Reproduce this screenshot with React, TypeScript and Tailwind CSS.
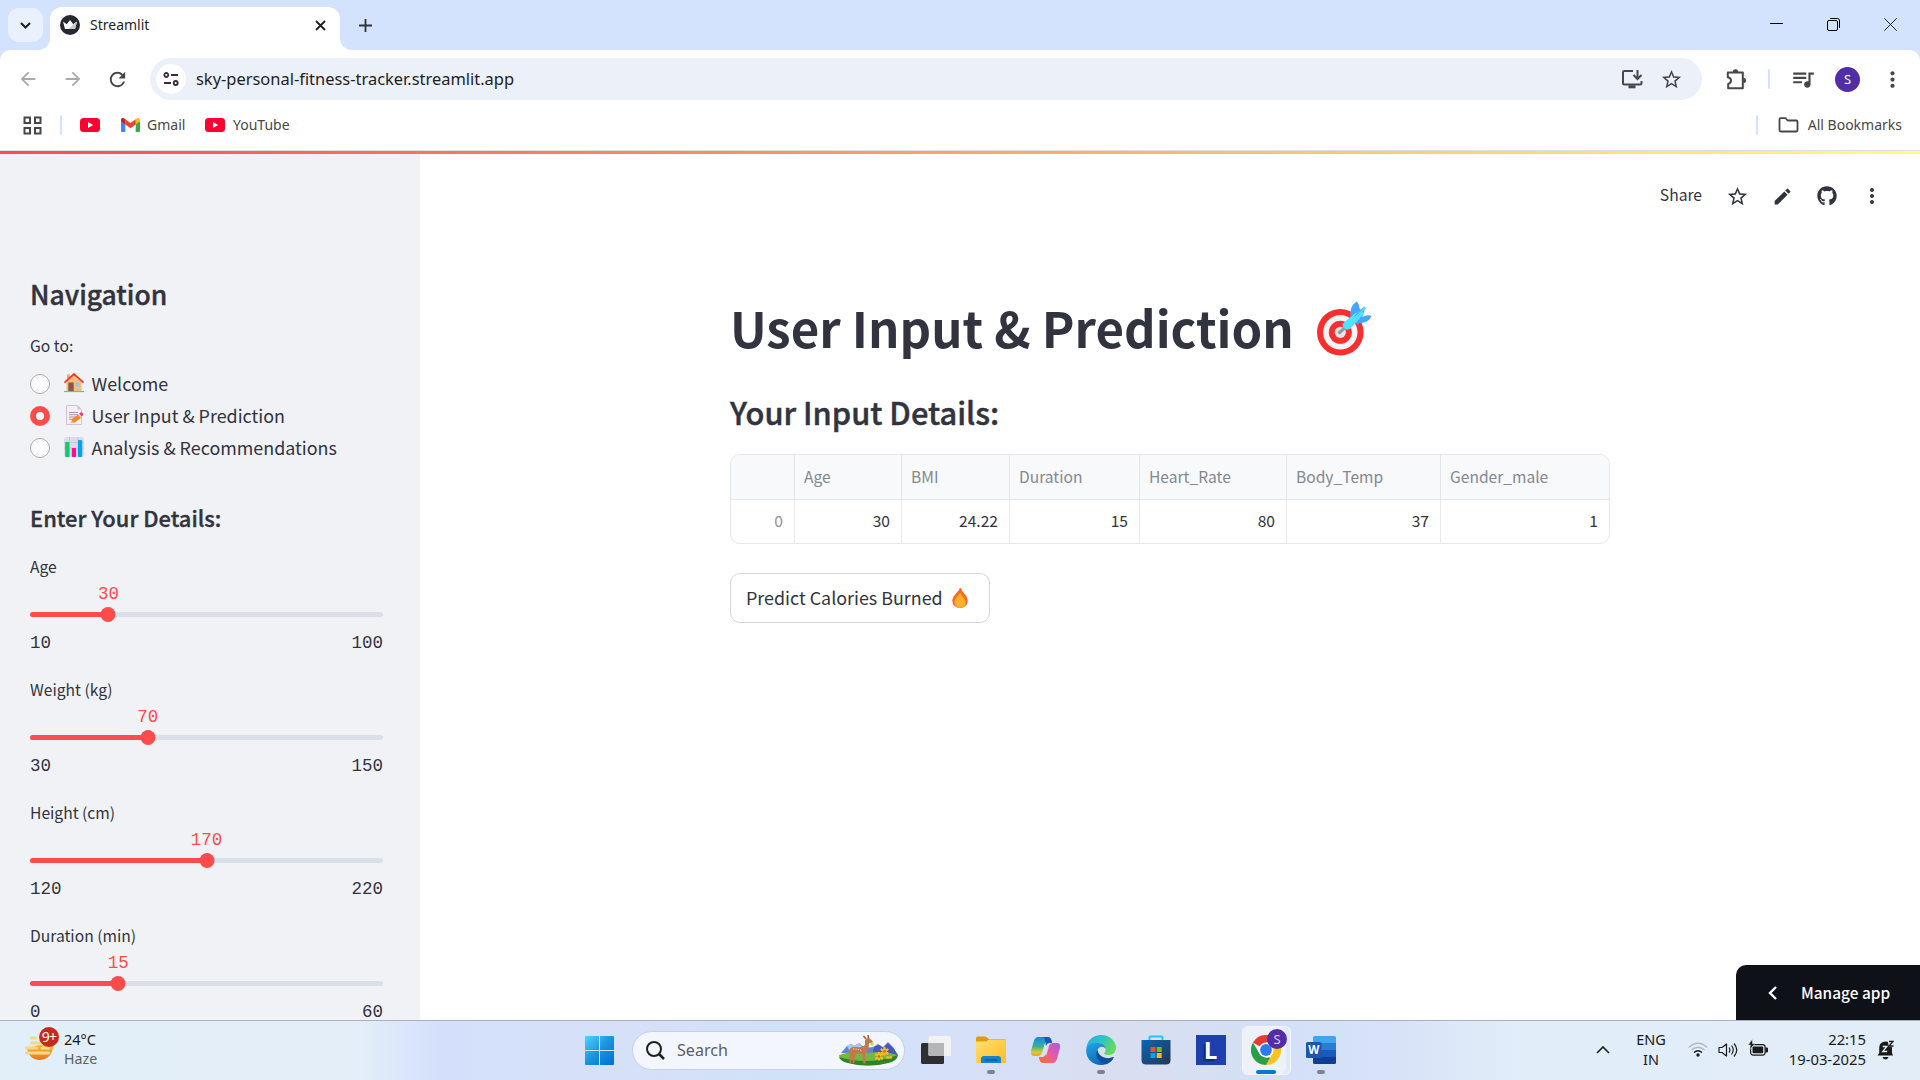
import type { ReactNode } from "react";
import { MdQueueMusic, MdStarBorder, MdEdit, MdMoreVert, MdArrowBack, MdArrowForward, MdRefresh } from "react-icons/md";
import { FaGithub } from "react-icons/fa";

const UI = "font-['Noto_Sans','Open_Sans',sans-serif]";
const APP = "font-['Noto_Sans_CJK_SC','Noto_Sans',sans-serif]";

/* ---------- browser icons ---------- */

function TabCurve({ flip }: { flip?: boolean }) {
  return (
    <svg className={flip ? "h-3 w-3 -scale-x-100 self-end" : "h-3 w-3 self-end"} viewBox="0 0 12 12">
      <path d="M12 0v12H0C7 12 12 7 12 0z" fill="#fff" />
    </svg>
  );
}

function Crown() {
  return (
    <svg className="h-5 w-5" viewBox="0 0 20 20">
      <circle cx="10" cy="10" r="10" fill="#262730" />
      <path d="M3 6.500l3.700 2.700L10 5l3.300 4.200L17 6.500l-2 7.500H5z" fill="#fff" />
      <path d="M10 5l3.300 4.200-4.500 4.800H15l2-7.500-3.700 2.700z" fill="#c9cbd2" />
    </svg>
  );
}

function TuneIcon() {
  return (
    <svg className="h-4 w-4" viewBox="0 0 16 16" fill="none" stroke="#303236" strokeWidth="1.800">
      <circle cx="3.300" cy="4" r="2" />
      <path d="M8 4h7M1 12h7" />
      <circle cx="12.700" cy="12" r="2" />
    </svg>
  );
}

function InstallIcon() {
  return (
    <svg className="h-5 w-[22px]" viewBox="0 0 22 20" fill="none" stroke="#474747" strokeWidth="2">
      <path d="M12 2H3.200Q2 2 2 3.200v11Q2 15.500 3.200 15.500h16Q20.500 15.500 20.500 14.200V12" />
      <path d="M7.500 17.800h7" strokeWidth="3" />
      <path d="M16.500 1v8.500M12.500 6l4 4 4-4" />
    </svg>
  );
}

function PuzzleIcon() {
  return (
    <svg className="h-[21px] w-[21px]" viewBox="0 0 21 21">
      <path d="M1.800 3.500h15v15.700H2.200v-4.200q2.800-.7 2.800-3.400t-3.200-3.400z" fill="none" stroke="#474747" strokeWidth="2" strokeLinejoin="round" />
      <path d="M6.800 3a2.700 2.700 0 0 1 5.400 0zM17.300 8.800a2.700 2.700 0 0 1 0 5.400z" fill="#474747" />
    </svg>
  );
}

function AppsGrid() {
  return (
    <svg className="h-[19px] w-[19px]" viewBox="0 0 19 19" fill="none" stroke="#474747" strokeWidth="2">
      <path d="M1.500 1.500h5.500v5.500H1.500zM12 1.500h5.500v5.500H12zM1.500 12h5.500v5.500H1.500zM12 12h5.500v5.500H12z" />
    </svg>
  );
}

function YouTubeLogo() {
  return (
    <svg className="h-[14px] w-5" viewBox="0 0 20 14">
      <rect width="20" height="14" rx="3.500" fill="#ff0033" />
      <path d="M8 4l5.200 3L8 10z" fill="#fff" />
    </svg>
  );
}

function GmailLogo() {
  return (
    <svg className="h-[14px] w-[19px]" viewBox="0 0 19 14">
      <path d="M0 3v10a1 1 0 0 0 1 1h3.300V5.500z" fill="#4285f4" />
      <path d="M14.700 5.500V14H18a1 1 0 0 0 1-1V3z" fill="#34a853" />
      <path d="M14.700 1.200V6.500L19 3.300V2c0-2-2-2.500-3.200-1.600z" fill="#fbbc04" />
      <path d="M4.300 6.500V1.200l5.200 3.900 5.200-3.900v5.300L9.500 10.300z" fill="#ea4335" />
      <path d="M0 2v1.300l4.300 3.200V1.200L3.200.4C2-.5 0 0 0 2z" fill="#c5221f" />
    </svg>
  );
}

function FolderOutline() {
  return (
    <svg className="h-4 w-[21px]" viewBox="0 0 21 16" fill="none" stroke="#474747" strokeWidth="1.800" strokeLinejoin="round">
      <path d="M1.500 2.500Q1.500 1.200 2.700 1.200H7.500l2.200 2.300h8.600q1.200 0 1.200 1.200v8.600q0 1.200-1.200 1.200H2.700q-1.200 0-1.200-1.200z" />
    </svg>
  );
}

/* ---------- emoji drawings ---------- */

function HouseEmoji() {
  return (
    <svg className="h-5 w-5" viewBox="0 0 20 20">
      <path d="M3 1.500h3v6H3z" fill="#f3ad61" />
      <path d="M2.500 8.500L10 1.500l7.500 7V18h-15z" fill="#f3c07b" />
      <path d="M1 9.200L10 1l9 8.200" fill="none" stroke="#f8312f" strokeWidth="1.700" strokeLinecap="round" />
      <rect x="4.300" y="9.500" width="5.400" height="8.500" fill="#8c5543" />
      <rect x="11.300" y="9.500" width="4.400" height="4" fill="#8fcaff" />
      <path d="M0 18.500h20" stroke="#00f397" strokeWidth="1.200" />
    </svg>
  );
}

function MemoEmoji() {
  return (
    <svg className="h-5 w-5" viewBox="0 0 20 20">
      <path d="M2.500.5h11l4 4v15h-15z" fill="#f3eef8" stroke="#cdc4d6" />
      <path d="M13.500.5v4h4z" fill="#cdc4d6" />
      <path d="M5 7.500h9M5 9.700h9M5 12h7M5 14.200h5" stroke="#998ea4" strokeWidth=".9" />
      <path d="M6.300 18.600l1.400-4 2.800 2.800z" fill="#f3c07b" />
      <path d="M7.500 14.500l6.700-5 3 3.300-6.900 5q-2.300-.5-2.800-3.300z" fill="#ff822d" />
      <path d="M15.200 8.500l1.300-1q1.200-.6 2.300.8.800 1.500-.2 2.400l-1.200.9z" fill="#f8316f" />
      <path d="M14 9.500l1.200-1 2.400 3-1.300 1z" fill="#d3d3d3" />
    </svg>
  );
}

function ChartEmoji() {
  return (
    <svg className="h-5 w-5" viewBox="0 0 20 20">
      <rect width="20" height="20" rx="2.500" fill="#e1d8ec" />
      <path d="M0 5.500h20M0 11h20M5.500 0v20M14 0v20" stroke="#c6bcd0" strokeWidth=".8" />
      <rect x="1.200" y="5" width="4.200" height="15" rx=".8" fill="#00d26a" />
      <rect x="7.800" y="11" width="4.200" height="9" rx=".8" fill="#fc0c93" />
      <rect x="14" y="3" width="4.200" height="17" rx=".8" fill="#00a6ed" />
    </svg>
  );
}

function TargetEmoji() {
  return (
    <svg className="mt-[4px] h-[55px] w-[55px]" viewBox="0 0 55 55">
      <circle cx="23.300" cy="31.300" r="23.300" fill="#f92f2f" />
      <circle cx="23.300" cy="31.300" r="17.200" fill="#f4f4f4" />
      <circle cx="23.300" cy="31.300" r="11.500" fill="#f92f2f" />
      <circle cx="23.300" cy="31.300" r="5.600" fill="#e6e6e6" />
      <path d="M22.500 31.500l4.500-4" stroke="#9b9b9b" strokeWidth="3.200" strokeLinecap="round" />
      <path d="M33.500 16q-1.500-10 6-15.500 3 2 3 9zM43 18.500l2-2.500q6-3 9.500-1-3 7.500-12.500 7z" fill="#46a4fb" />
      <path d="M34 14l6-9 5 5-3 4 6-7-4 14-4 3z" fill="#46a4fb" />
      <path d="M27 21.500l12-10q2 5 4 5.500l-9.500 10.500q-3.500 2.500-6.500-.5t0-5.500z" fill="#50e2ff" />
      <path d="M37 16.500l10.500-9.500M38 20l7.500-7.500" stroke="#50e2ff" strokeWidth="2.600" strokeLinecap="round" />
      <path d="M37.500 15.500L46.500 7" stroke="#46a4fb" strokeWidth="1" />
    </svg>
  );
}

function FireEmoji() {
  return (
    <svg className="h-5 w-4" viewBox="0 0 16 20">
      <path d="M7.800 0C7 4 .3 7.200.3 13A7.500 7 0 0 0 8 20a7.500 7 0 0 0 7.700-7C15.700 7 10 5 9.200.5 9 0 8-.5 7.800 0z" fill="#ff6723" />
      <path d="M8.200 4.500C6.500 8 2.500 10 2.500 14.500a5.600 5.300 0 0 0 5.700 5.300 5.600 5.300 0 0 0 5.600-5.300C13.800 10.500 9.800 9 8.200 4.500z" fill="#ffb02e" />
    </svg>
  );
}

/* ---------- browser chrome ---------- */

function TabStrip() {
  return (
    <div className="flex h-[50px] items-center bg-[#d3e3fd]">
      <div className="ml-2 flex h-[34px] w-[35px] items-center justify-center rounded-[11px] bg-[#e9f1fe]">
        <svg className="h-[7px] w-[11px]" viewBox="0 0 11 7" fill="none" stroke="#1f1f1f" strokeWidth="2">
          <path d="M1 1l4.500 4.500L10 1" />
        </svg>
      </div>
      <div className="-ml-[5px] flex h-[50px] items-end">
        <TabCurve />
        <div className="flex h-[43px] w-[290px] items-center rounded-t-[12px] bg-white pb-[8px] pl-[10px] pr-[14px]">
          <div className="mt-[1px]"><Crown /></div>
          <span className="ml-[10px] flex-1 text-[14px] leading-5 text-[#1f1f1f]">Streamlit</span>
          <svg className="mt-[1px] h-[11px] w-[11px]" viewBox="0 0 11 11" stroke="#1f1f1f" strokeWidth="1.800">
            <path d="M1 1l9 9M10 1l-9 9" />
          </svg>
        </div>
        <TabCurve flip />
      </div>
      <svg className="ml-[7px] h-[13px] w-[13px]" viewBox="0 0 13 13" stroke="#303236" strokeWidth="1.800">
        <path d="M6.500 0v13M0 6.500h13" />
      </svg>
      <div className="mb-px ml-auto mr-[23px] flex items-center gap-[44px]">
        <svg className="h-[13px] w-[13px]" viewBox="0 0 13 13" stroke="#000"><path d="M0 5.500h13" /></svg>
        <svg className="h-[13px] w-[13px]" viewBox="0 0 13 13" fill="none" stroke="#000">
          <rect x=".5" y="2.500" width="10" height="10" rx="1.500" />
          <path d="M3 .5h7.500q2 0 2 2V10" />
        </svg>
        <svg className="h-[13px] w-[13px]" viewBox="0 0 13 13" stroke="#222"><path d="M.3.3l12.400 12.400M12.700.3L.3 12.700" /></svg>
      </div>
    </div>
  );
}

function Toolbar() {
  return (
    <div className="bg-[#d3e3fd]">
      <div className="flex h-[58px] items-center rounded-t-[10px] bg-white text-[#474747]">
        <MdArrowBack className="ml-[17px] size-[22px] text-[#aaaaaa]" />
        <MdArrowForward className="ml-[23px] size-[22px] text-[#aaaaaa]" />
        <MdRefresh className="ml-[22px] size-[23px]" />
        <div className="ml-[21px] flex h-[42px] w-[1552px] items-center rounded-full bg-[#ebf0f9] pl-[6px]">
          <div className="flex size-[30px] items-center justify-center rounded-full bg-white"><TuneIcon /></div>
          <span className="ml-[10px] flex-1 text-[16.460px] leading-6 text-[#1f1f1f]">sky-personal-fitness-tracker.streamlit.app</span>
          <InstallIcon />
          <MdStarBorder className="ml-[17px] mr-[19px] size-[23px]" />
        </div>
        <div className="ml-[24px]"><PuzzleIcon /></div>
        <div className="ml-[21px] h-5 w-[2px] rounded bg-[#d3e3fd]" />
        <MdQueueMusic className="ml-[20px] size-[26px]" />
        <div className={`ml-[19px] flex size-[25px] items-center justify-center rounded-full bg-[#512da8] text-[13px] leading-none text-white ${UI}`}>S</div>
        <MdMoreVert className="ml-[20px] size-[25px]" />
      </div>
    </div>
  );
}

function Bookmarks() {
  return (
    <div className="flex h-[42px] items-center bg-white pb-[8px] text-[14px] leading-5 text-[#474747]">
      <div className="ml-[23px]"><AppsGrid /></div>
      <div className="ml-[18px] h-5 w-[2px] rounded bg-[#d3e3fd]" />
      <div className="ml-[18px]"><YouTubeLogo /></div>
      <div className="ml-[21px]"><GmailLogo /></div>
      <span className="ml-[7px] w-[38px] text-[14px]">Gmail</span>
      <div className="ml-[20px]"><YouTubeLogo /></div>
      <span className="ml-[8px]">YouTube</span>
      <div className="ml-auto h-5 w-[2px] rounded bg-[#d3e3fd]" />
      <div className="ml-[20px]"><FolderOutline /></div>
      <span className="ml-[9px] mr-[18px]">All Bookmarks</span>
    </div>
  );
}

/* ---------- sidebar ---------- */

const pages: { label: string; icon: ReactNode; active?: boolean }[] = [
  { label: "Welcome", icon: <HouseEmoji /> },
  { label: "User Input & Prediction", icon: <MemoEmoji />, active: true },
  { label: "Analysis & Recommendations", icon: <ChartEmoji /> },
];

const sliders = [
  { label: "Age", min: 10, max: 100, value: 30 },
  { label: "Weight (kg)", min: 30, max: 150, value: 70 },
  { label: "Height (cm)", min: 120, max: 220, value: 170 },
  { label: "Duration (min)", min: 0, max: 60, value: 15 },
];

function Slider({ label, min, max, value }: { label: string; min: number; max: number; value: number }) {
  const pct = `${((value - min) / (max - min)) * 100}%`;
  return (
    <div className="mb-[22px] h-[101px]">
      <div className="h-[26px] text-[15.650px] leading-[26px]">{label}</div>
      <div className="mt-[2px] h-6 font-['Liberation_Mono',monospace] text-[17.500px] leading-6 text-[#ff4b4b]">
        <span className="inline-block -translate-x-1/2" style={{ marginLeft: pct }}>{value}</span>
      </div>
      <div className="relative mt-[6px] h-[5px] rounded-full bg-[#dadfe9]">
        <div className="h-[5px] rounded-full bg-[#ff4b4b]" style={{ width: pct }} />
        <div className="absolute -top-[5px] size-[15px] -translate-x-1/2 rounded-full bg-[#ff4b4b]" style={{ left: pct }} />
      </div>
      <div className="mt-[18px] flex h-4 justify-between font-['Liberation_Mono',monospace] text-[17.500px] leading-4">
        <span>{min}</span>
        <span>{max}</span>
      </div>
    </div>
  );
}

function Sidebar() {
  return (
    <aside className={`h-full w-[420px] shrink-0 overflow-hidden bg-[#f0f2f6] pl-[30px] pr-[37px] pt-[122px] text-[#31333f] ${APP}`}>
      <h2 className="h-9 text-[26.500px] font-medium leading-9 [-webkit-text-stroke:0.4px_#31333f]">Navigation</h2>
      <div className="mt-[21px] h-[26px] text-[15.650px] leading-[26px]">Go to:</div>
      <div className="mt-[9px]">
        {pages.map((p) => (
          <div key={p.label} className="flex h-8 items-center">
            {p.active ? (
              <div className="size-5 rounded-full border-[6px] border-[#ff4b4b] bg-white" />
            ) : (
              <div className="size-5 rounded-full border border-[#a9abb2] bg-[#fafafc]" />
            )}
            <div className="ml-[14px] mb-[2px]">{p.icon}</div>
            <span className="mb-[2px] ml-[7.500px] text-[17.900px] leading-[30px]">{p.label}</span>
          </div>
        ))}
      </div>
      <h3 className="mb-[22px] mt-[38px] h-[30px] text-[21.900px] font-medium leading-[31px] [-webkit-text-stroke:0.35px_#31333f]">Enter Your Details:</h3>
      {sliders.map((s) => (
        <Slider key={s.label} {...s} />
      ))}
    </aside>
  );
}

/* ---------- main pane ---------- */

const headers = ["", "Age", "BMI", "Duration", "Heart_Rate", "Body_Temp", "Gender_male"];
const cells = ["0", "30", "24.22", "15", "80", "37", "1"];

function DataTable() {
  return (
    <div className="mt-[20px] grid h-[90px] w-[880px] grid-cols-[64px_107px_108px_130px_147px_154px_168px] grid-rows-[45px_43px] overflow-hidden rounded-[10px] border border-[#e6e7ea] text-[15.600px]">
      {headers.map((h, i) => (
        <div key={i} className={i === 6 ? "border-b border-[#e4e5e8] bg-[#f8f9fb] pl-[9px] leading-[43px] text-[#858791]" : "border-b border-r border-[#e4e5e8] bg-[#f8f9fb] pl-[9px] leading-[43px] text-[#858791]"}>{h}</div>
      ))}
      {cells.map((c, i) => (
        <div key={i} className={i === 0 ? "border-r border-[#e8e9eb] pr-[11px] text-right leading-[41px] text-[#8e9099]" : "border-r border-[#e8e9eb] pr-[11px] text-right leading-[41px] last:border-r-0"}>{c}</div>
      ))}
    </div>
  );
}

function MainPane() {
  return (
    <main className={`flex h-full flex-1 flex-col bg-white text-[#31333f] ${APP}`}>
      <div className="mt-[30px] flex h-6 items-center justify-end pr-[36px]">
        <span className="mb-[3px] text-[15.650px] leading-6">Share</span>
        <MdStarBorder className="ml-[24px] size-[23px]" />
        <MdEdit className="ml-[23px] size-[21px]" />
        <FaGithub className="ml-[24px] size-5" />
        <MdMoreVert className="ml-[23px] size-6" />
      </div>
      <div className="mt-[89px] flex-1 pl-[310px]">
        <h1 className="flex h-[60px] text-[49.150px] font-bold leading-[60px]">
          <span className="w-[587px] whitespace-nowrap">User Input &amp; Prediction</span>
          <TargetEmoji />
        </h1>
        <h2 className="mt-[33px] h-11 text-[30.800px] font-medium leading-[43px] [-webkit-text-stroke:0.45px_#31333f]">Your Input Details:</h2>
        <DataTable />
        <button className="mt-[29px] flex h-[50px] w-[260px] items-center rounded-[10px] border border-[#d6d6d9] bg-white pl-[15px]">
          <span className="mb-[3px] w-[206px] text-left text-[17.900px] leading-[30px]">Predict Calories Burned</span>
          <FireEmoji />
        </button>
      </div>
      <div className="ml-auto flex h-[55px] w-[184px] items-center rounded-tl-[10px] bg-[#0e1117] pl-[32px] text-white">
        <svg className="h-[14px] w-[9px]" viewBox="0 0 9 14" fill="none" stroke="#fff" strokeWidth="2.400">
          <path d="M8 1L2 7l6 6" />
        </svg>
        <span className="mb-[2px] ml-[24px] text-[15.400px] font-medium leading-6">Manage app</span>
      </div>
    </main>
  );
}

/* ---------- taskbar ---------- */

function Deer() {
  return (
    <svg className="h-[31px] w-[61px]" viewBox="0 0 61 31">
      <path d="M3 18L9 11l4-2 3 2 5-3 6 5 8-1 5-3 5 3 5-5 6 6 3 7z" fill="#6284d8" />
      <path d="M36 12l5-2 4 3 5-5 6 6 4 6H34z" fill="#4658b8" />
      <path d="M9 11l4-2 3 2 5-3 3 3-4 4-4-2-5 2z" fill="#a9c8f4" />
      <path d="M1 20q14-5 29-2 14-3 30 2-1 6-10 8-20 5-40 0-9-3-9-8z" fill="#74b83f" />
      <path d="M1 22q29 9 59-2-1 6-10 8-20 5-40 0-8-2-9-6z" fill="#2f8427" />
      <path d="M12 14q2-3 7-2 5 1 8-2V5.500q1-3 4-2.500l4 3.500-1 1.500h-3l-.5 7-3.500 3.500.5 10h-2l-1.500-9.500h-6L17 21.500 16.500 28h-1.800L14 21l-1 7h-1.500z" fill="#c07a4a" />
      <path d="M28 4l-2.500-3M30.500 3.500L30 0" stroke="#a85b38" strokeWidth="1.600" />
      <path d="M15 14q5-.5 9 2" stroke="#f0cba8" strokeWidth="1.200" strokeDasharray="1.200 1.200" fill="none" />
      <circle cx="34" cy="9" r="1.800" fill="#c6dd57" />
      <g fill="none" stroke="#ffb81f" strokeWidth="2.300" strokeLinecap="round">
        <path d="M43.500 14.500l6 4M49.500 14.500l-6 4M46.500 13v6.500M38 19.500l6 4M44 19.500l-6 4M41 18v6.500M49 22.500h4" />
      </g>
      <circle cx="46.500" cy="16.500" r="1.300" fill="#c46d10" />
      <circle cx="41" cy="21.500" r="1.300" fill="#c46d10" />
    </svg>
  );
}

function WindowsLogo() {
  return (
    <svg className="size-[29px]" viewBox="0 0 29 29">
      <defs>
        <linearGradient id="win" x1="0" y1="0" x2="1" y2="1">
          <stop offset="0" stopColor="#4fd4fc" /><stop offset=".5" stopColor="#1893e0" /><stop offset="1" stopColor="#0070d2" />
        </linearGradient>
      </defs>
      <path d="M0 1q0-1 1-1h13v14H0zM15 0h13q1 0 1 1v13H15zM0 15h14v14H1q-1 0-1-1zM15 15h14v13q0 1-1 1H15z" fill="url(#win)" />
    </svg>
  );
}

function TaskView() {
  return (
    <svg className="h-[28px] w-[30px]" viewBox="0 0 30 28">
      <rect y="7" width="23" height="21" rx="1.500" fill="#2f2f31" />
      <rect x="7.500" width="22.500" height="20" rx="1.500" fill="#f2f2f2" />
      <path d="M7.500 7H23v13H9q-1.500 0-1.500-1.500z" fill="#b5b6b8" />
    </svg>
  );
}

function Explorer() {
  return (
    <svg className="h-[28px] w-[30px]" viewBox="0 0 30 28">
      <defs><linearGradient id="fold" x1="0" y1="0" x2="1" y2="1"><stop offset="0" stopColor="#ffe072" /><stop offset="1" stopColor="#fcbd22" /></linearGradient></defs>
      <path d="M0 2Q0 .5 1.500.5H9q1 0 2 1L13 3h15q2 0 2 2v6H0z" fill="#dd9c0d" />
      <path d="M0 5.500h10L13 3.500h15.500Q30 3.500 30 5v22H1.500Q0 27 0 25.500z" fill="url(#fold)" />
      <path d="M5 27v-4q0-3 3-3h14q3 0 3 3v4z" fill="#1382cf" />
      <path d="M9 24h12" stroke="#084a83" strokeWidth="1.200" strokeLinecap="round" />
    </svg>
  );
}

function Copilot() {
  return (
    <svg className="h-[26px] w-[29px]" viewBox="0 0 29 26">
      <defs>
        <linearGradient id="cpa" x1="0" y1="0" x2="0" y2="1"><stop offset="0" stopColor="#138be8" /><stop offset=".5" stopColor="#3dae99" /><stop offset=".8" stopColor="#d7cd27" /><stop offset="1" stopColor="#f89a34" /></linearGradient>
        <linearGradient id="cpb" x1="1" y1="0" x2="0" y2="1"><stop offset="0" stopColor="#a65be8" /><stop offset=".5" stopColor="#e85a9d" /><stop offset="1" stopColor="#ff7b3b" /></linearGradient>
      </defs>
      <path d="M7 0h10q3 0 4 5h-5q-2 0-3 4l-2 7q-1 3-4 3H3q-4 0-3-5L2.500 5Q4 0 7 0z" fill="url(#cpa)" />
      <path d="M22 26H12q-3 0-4-6h4q3 0 4-4l2-7q1-3 4-3h4q4 0 3 5l-2.500 9Q25 26 22 26z" fill="url(#cpb)" />
      <path d="M12 0h5q3 0 4 6h-3q-2 0-3 3-1-9-3-9z" fill="#1458c5" />
      <path d="M16 26h-4q-3 0-4-6h4q2 0 3-3 1 6 1 9z" fill="#ef6850" />
    </svg>
  );
}

function Edge() {
  return (
    <svg className="size-[30px]" viewBox="0 0 30 30">
      <defs>
        <linearGradient id="eda" x1="0" y1="0" x2="1" y2=".5"><stop offset="0" stopColor="#25a9e8" /><stop offset=".5" stopColor="#2cc3c8" /><stop offset="1" stopColor="#65dc58" /></linearGradient>
        <linearGradient id="edb" x1="0" y1="0" x2=".6" y2="1"><stop offset="0" stopColor="#22a4e4" /><stop offset="1" stopColor="#1063b4" /></linearGradient>
      </defs>
      <path d="M.3 13C1.500 5 7.500 0 15 0c9 0 15 6.500 15 12.500 0 5-3.500 7.500-7.500 7.500-3 0-5-1-4-2.300 1-1.200 1.500-2.700 1-4.200-.8-2.500-4-4-7.500-4C7 9.500 2.500 11 .3 13z" fill="url(#eda)" />
      <path d="M.2 14.500C1 9.500 6 8 10 8c5 0 9.500 2 9.800 6-1.500-2.500-5-3-7-1-3 3-1.500 9 3 11.500 4 2.200 8 1.200 11.500-1C24.500 28 20 30 15 30 5.500 30-.5 22.500.2 14.500z" fill="url(#edb)" />
      <path d="M11.500 14.500C8 21 13 28.500 20 29c3.500-1.300 6-3.500 7.700-6.300.3-.6 0-1-.7-.6-2.500 1.300-5.500 1.500-8.500.5-4.500-1.500-7-5-7-8.100z" fill="#0c4f9c" />
    </svg>
  );
}

function Store() {
  return (
    <svg className="size-[30px]" viewBox="0 0 30 30">
      <defs><linearGradient id="sto" x1="0" y1="0" x2="1" y2="1"><stop offset="0" stopColor="#0c66b4" /><stop offset="1" stopColor="#233654" /></linearGradient></defs>
      <path d="M8.500 6V2.500Q8.500 1.500 9.500 1.500h11q1 0 1 1V6" fill="none" stroke="#27c1f4" strokeWidth="2" />
      <path d="M.5 5h29v20q0 4.500-4.500 4.500H5Q.5 29.500.5 25z" fill="url(#sto)" />
      <path d="M9.500 12H14.500v5h-5z" fill="#f25022" /><path d="M15.700 12h5v5h-5z" fill="#7fba00" />
      <path d="M9.500 18h5v5h-5z" fill="#00a4ef" /><path d="M15.700 18h5v5h-5z" fill="#ffb900" />
    </svg>
  );
}

function Chrome() {
  return (
    <svg className="size-[30px] shrink-0" viewBox="0 0 30 30">
      <path d="M15 15L2 7.500A15 15 0 0 1 28 7.500H15z" fill="#ea3a2d" />
      <path d="M15 7.500H28A15 15 0 0 1 15 30l6.500-11.300z" fill="#fcc31e" />
      <path d="M2 7.500l6.500 11.200L15 22.500h4.300L15 30A15 15 0 0 1 2 7.500z" fill="#2a9f47" />
      <circle cx="15" cy="15" r="7.500" fill="#fff" /><circle cx="15" cy="15" r="5.900" fill="#2f7bec" />
    </svg>
  );
}

function Word() {
  return (
    <svg className="h-7 w-[30px]" viewBox="0 0 30 28">
      <path d="M7 1.500Q7 0 8.500 0h20Q30 0 30 1.500V7H7z" fill="#41a5ee" /><path d="M7 7h23v7H7z" fill="#2b7cd3" /><path d="M7 14h23v7H7z" fill="#185abd" /><path d="M7 21h23v5.500q0 1.500-1.500 1.500h-20Q7 28 7 26.500z" fill="#103f91" />
      <rect y="6" width="15.500" height="16" rx="1.500" fill="#1b56b3" />
      <text x="7.700" y="18.300" textAnchor="middle" fontFamily="Open Sans, sans-serif" fontWeight="700" fontSize="11.500" fill="#fff">W</text>
    </svg>
  );
}

function TaskItem({ children, running }: { children: ReactNode; running?: boolean }) {
  return (
    <div className="flex h-full w-[55px] flex-col items-center">
      <div className="mt-[14px] flex h-[30px] items-center">{children}</div>
      {running && <div className="mt-[5px] h-1 w-2 rounded-full bg-[#7d828c]" />}
    </div>
  );
}

function Taskbar() {
  return (
    <footer className={`flex h-[60px] items-start border-t border-[#aab1bf] bg-[linear-gradient(90deg,#e2eef8_0px,#e3eef9_360px,#d4e0fb_440px,#d6e0f7_640px,#d0e2f8_780px,#d6e0f9_950px,#d9dff0_1130px,#d3e0f7_1290px,#d8e3f8_1400px,#e1edf9_1520px,#e2edf8_1920px)] text-[14.500px] leading-5 text-[#1b1b1b] ${UI}`}>
      <div className="relative ml-[25px] mt-[3px] h-[38px] w-[34px]">
        <svg className="mt-[12px] h-6 w-[29px]" viewBox="0 0 29 24">
          <defs><linearGradient id="haze" x1="0" y1="0" x2="0" y2="1"><stop offset="0" stopColor="#f8bd32" /><stop offset="1" stopColor="#ec7418" /></linearGradient></defs>
          <path d="M2 12Q4 24 15 24q12-1 13.500-15H14z" fill="url(#haze)" />
          <path d="M6.500 2h4M6.500 7h10M1.500 12h10M17 12h7M1.500 17h22" stroke="#f4d98c" strokeWidth="3" strokeLinecap="round" />
        </svg>
        <span className="absolute left-[14px] top-[3px] flex size-5 items-center justify-center rounded-full bg-[#c42b1c] text-[14px] leading-none tracking-tighter text-white">9+</span>
      </div>
      <div className="ml-[5px] mt-[8px] w-[521px]">
        <div>24°C</div>
        <div className="text-[14.200px] text-[#5c6066]">Haze</div>
      </div>
      <div className="mt-[15px]"><WindowsLogo /></div>
      <div className="ml-[18px] mt-[9.500px] flex h-[39px] w-[273px] items-center rounded-full border border-[#c3d0e8] bg-[#f3f7fd] pl-[13px]">
        <svg className="h-[19px] w-[19px]" viewBox="0 0 19 19" fill="none" stroke="#1f1f1f" strokeWidth="2">
          <circle cx="8" cy="8" r="7" /><path d="M13 13l5 5" strokeWidth="2.500" />
        </svg>
        <span className="ml-[12px] flex-1 text-[16.100px] leading-6 text-[#5b5f66]">Search</span>
        <div className="mr-[5px] mt-px"><Deer /></div>
      </div>
      <div className="ml-[3px] flex h-full">
        <TaskItem><TaskView /></TaskItem>
        <TaskItem running><Explorer /></TaskItem>
        <TaskItem><Copilot /></TaskItem>
        <TaskItem running><Edge /></TaskItem>
        <TaskItem><Store /></TaskItem>
        <TaskItem>
          <div className="flex size-[30px] items-center justify-center bg-[#1e40af] font-['Open_Sans',sans-serif] text-[24px] font-bold leading-none text-white [text-shadow:-2px_2px_1px_#0b2f6b]">L</div>
        </TaskItem>
        <div className="ml-[4px] mr-[2px] mt-[5px] h-[49px] w-[49px] rounded-[6px] border border-white/60 bg-white/30">
          <div className="relative flex h-[47px] w-[43px] flex-col items-center rounded-[6px] bg-[#ecf1fa] pl-[3px] pt-[8px]">
            <Chrome />
            <span className="absolute left-[24px] top-[2px] flex size-5 items-center justify-center rounded-full bg-[#512da8] text-[13px] leading-none text-[#d8cdf0]">S</span>
            <div className="mt-[5px] h-1 w-5 rounded-full bg-[#0078d4]" />
          </div>
        </div>
        <TaskItem running><Word /></TaskItem>
      </div>
      <div className="ml-auto flex h-full items-start pt-[8px]">
        <svg className="mt-[17px] h-2 w-[14px]" viewBox="0 0 14 8" fill="none" stroke="#1b1b1b" strokeWidth="1.600"><path d="M1 7l6-6 6 6" /></svg>
        <div className="ml-[26px] w-[30px] text-center"><div>ENG</div><div>IN</div></div>
        <svg className="ml-[22px] mt-[13px] h-[15px] w-5" viewBox="0 0 20 15" fill="none" strokeWidth="1.300">
          <path d="M.8 5.500Q10-3 19.200 5.500M3.500 8q6.500-5.500 13 0" stroke="#b0b8c4" />
          <path d="M6 10.500q4-3.500 8 0" stroke="#1b1b1b" strokeWidth="1.500" /><circle cx="10" cy="13" r="1.700" fill="#1b1b1b" />
        </svg>
        <svg className="ml-[10px] mt-[13px] h-4 w-5" viewBox="0 0 20 16" fill="none" stroke="#1b1b1b" strokeWidth="1.200" strokeLinejoin="round">
          <path d="M1 5.500h3L8.500 2v12L4 10.500H1zM11 5.500q1.800 2.500 0 5M13.500 3.500q3.500 4.500 0 9M16 1.500q5.500 6.500 0 13" />
        </svg>
        <svg className="ml-[10px] mt-[10px] h-[18px] w-5" viewBox="0 0 20 18">
          <rect x="2.600" y="5.600" width="14.500" height="10.500" rx="2.500" fill="none" stroke="#1b1b1b" strokeWidth="1.200" />
          <rect x="4.500" y="7.500" width="10.700" height="6.700" rx="1" fill="#1b1b1b" />
          <path d="M17.500 8.500h1.500q1 0 1 1v3q0 1-1 1h-1.500z" fill="#1b1b1b" />
          <path d="M4.500 0L0 6h2.500l-1 5L7 4.500H4.500z" fill="#1b1b1b" stroke="#e2edf8" strokeWidth=".6" />
        </svg>
        <div className="ml-[20px] w-[78px] whitespace-nowrap text-right text-[14.800px]"><div>22:15</div><div>19-03-2025</div></div>
        <svg className="ml-[11px] mr-[26px] mt-[11px] h-5 w-[17px]" viewBox="0 0 17 20">
          <path d="M2.200 13V8q0-6.500 6.500-6.500T15 8v5l1 2.500H.5zM5.500 17h6q-1 2.500-3 2.500t-3-2.500z" fill="#1b1b1b" />
          <path d="M5.700 6.500h4.200l-4.200 5h4.500" fill="none" stroke="#e2edf8" strokeWidth="1.300" />
          <path d="M10.500 0H17v7h-5z" fill="#e2edf8" />
          <path d="M12 1.500h4l-4 4.500h4.500" fill="none" stroke="#1b1b1b" strokeWidth="1.300" />
        </svg>
      </div>
    </footer>
  );
}

export default function App() {
  return (
    <div className={`flex h-[1080px] w-[1920px] flex-col overflow-hidden bg-white ${UI}`}>
      <TabStrip />
      <Toolbar />
      <Bookmarks />
      <div className="h-px bg-[#dcdfe4]" />
      <div className="h-[3px] bg-[linear-gradient(90deg,#ff4b4b,#fffd80)]" />
      <div className="flex h-[866px]">
        <Sidebar />
        <MainPane />
      </div>
      <Taskbar />
    </div>
  );
}
